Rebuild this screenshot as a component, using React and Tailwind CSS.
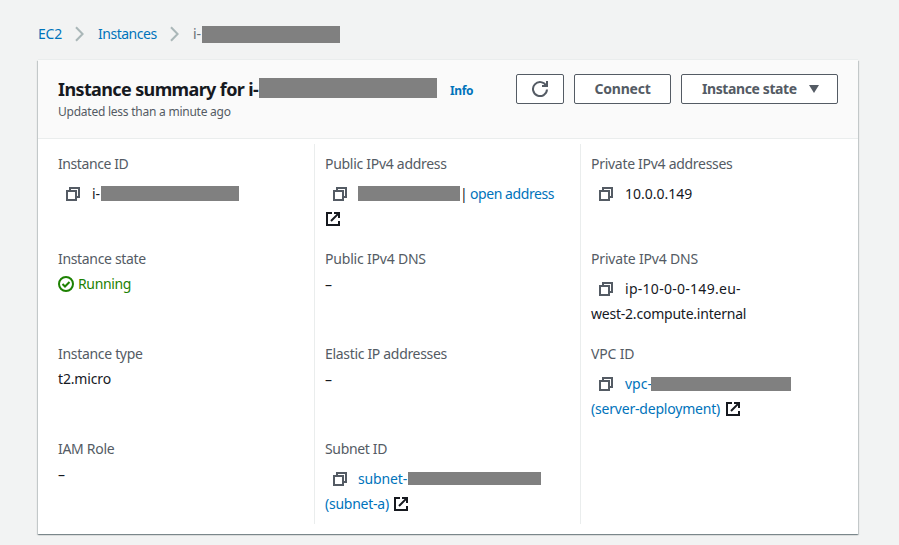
import React from "react";

function CopyIcon() {
  return (
    <svg width="14" height="14" viewBox="0 0 14 14" className="ml-2 shrink-0" fill="none" stroke="#545b64" strokeWidth="2">
      <path d="M1 4h9v9H1z" />
      <path d="M4 4V1h9v9h-3" />
    </svg>
  );
}

function ExternalIcon({ className = "" }) {
  return (
    <svg width="14" height="14" viewBox="0 0 14 14" className={"shrink-0 " + className} fill="none" stroke="#16191f" strokeWidth="2">
      <path d="M6 1H1v12h12V9" />
      <path d="M8 1h5v5M12.6 1.4 5 9" />
    </svg>
  );
}

function Chevron({ className = "" }) {
  return (
    <svg width="9" height="16" viewBox="0 0 9 16" className={"shrink-0 " + className} fill="none" stroke="#aab7b8" strokeWidth="2">
      <path d="M1 1.2 7.6 8 1 14.8" />
    </svg>
  );
}

function Mask({ className }) {
  return <span className={"block shrink-0 bg-[#808080] " + className} />;
}

function Field({ label, tracking = "tracking-[-0.29px]", children }) {
  return (
    <div className="h-[95px]">
      <div className={"flex h-6 items-center text-[#545b64] " + tracking}>{label}</div>
      {children}
    </div>
  );
}

function Line({ className = "", children }) {
  return <div className={"flex h-[25px] items-center " + className}>{children}</div>;
}

export default function App() {
  return (
    <div className="h-[545px] w-[899px] overflow-hidden bg-[#f2f3f3] pl-[38px] font-['Noto_Sans','Open_Sans',sans-serif] text-[14px] leading-5 whitespace-nowrap text-[#16191f]">
      <nav className="flex h-[60px] items-center pt-2 text-[#0073bb]">
        <span className="w-[37px] tracking-[-0.2px]">EC2</span>
        <Chevron className="mr-[14px]" />
        <span className="w-[72px] tracking-[-0.48px]">Instances</span>
        <Chevron className="mr-[14px]" />
        <span className="w-[9px] text-[#687078]">i-</span>
        <Mask className="h-[17px] w-[138px]" />
      </nav>

      <main className="h-[474px] w-[820px] bg-white shadow-[0_-1px_0_0_#eaeded,0_1px_1px_0_rgba(0,28,36,0.3),1px_1px_1px_0_rgba(0,28,36,0.15),-1px_1px_1px_0_rgba(0,28,36,0.15)]">
        <header className="flex h-[79px] justify-between border-b border-[#eaeded] bg-[#fafafa] px-5">
          <div className="pt-4">
            <div className="flex h-6 items-center">
              <h1 className="w-[201px] pt-px text-[18px] font-bold tracking-[-0.62px]">Instance summary for i-</h1>
              <Mask className="h-5 w-[178px]" />
              <span className="ml-[13px] pt-[6px] text-[12px] font-bold tracking-[-0.4px] text-[#0073bb]">Info</span>
            </div>
            <p className="mt-[2px] text-[12px] leading-5 tracking-[-0.24px] text-[#545b64]">Updated less than a minute ago</p>
          </div>
          <div className="flex gap-[10px] pt-[14px] font-bold text-[#545b64]">
            <button className="flex h-[30px] w-12 items-center justify-center rounded-[2px] border border-[#545b64] bg-white">
              <svg width="16" height="16" viewBox="0 0 16 16" fill="none" stroke="#545b64" strokeWidth="2">
                <path d="M15 8.5A7 7 0 1 1 14.2 4.8" />
                <path d="M15 0v5H10" />
              </svg>
            </button>
            <button className="flex h-[30px] w-[97px] items-center justify-center rounded-[2px] border border-[#545b64] bg-white tracking-[-0.2px]">Connect</button>
            <button className="flex h-[30px] w-[157px] items-center rounded-[2px] border border-[#545b64] bg-white pl-5">
              <span className="w-[107px] text-left tracking-[-0.4px]">Instance state</span>
              <svg width="10" height="8" viewBox="0 0 10 8" fill="#545b64">
                <path d="M0 0h10L5 8z" />
              </svg>
            </button>
          </div>
        </header>

        <div className="mt-[5px] grid h-[380px] grid-cols-[276px_266px_278px] grid-rows-[380px]">
          <section className="pt-2 pl-5">
            <Field label="Instance ID" tracking="tracking-[-0.42px]">
              <Line className="mt-[5px]">
                <CopyIcon />
                <span className="ml-3 w-[9px]">i-</span>
                <Mask className="h-[15px] w-[138px]" />
              </Line>
            </Field>
            <Field label="Instance state" tracking="tracking-[-0.33px]">
              <Line className="tracking-[-0.35px] text-[#1d8102]">
                <svg width="16" height="16" viewBox="0 0 16 16" className="mr-1" fill="none" stroke="#1d8102" strokeWidth="2">
                  <circle cx="8" cy="8" r="7" />
                  <path d="M4.5 8 7 10.5 11.5 6" />
                </svg>
                Running
              </Line>
            </Field>
            <Field label="Instance type" tracking="tracking-[-0.31px]">
              <Line className="tracking-[-0.15px]">t2.micro</Line>
            </Field>
            <Field label="IAM Role">
              <Line className="pt-[2px]">–</Line>
            </Field>
          </section>

          <section className="border-l border-[#eaeded] pt-2 pl-[10px]">
            <Field label="Public IPv4 address">
              <Line className="mt-[5px]">
                <CopyIcon />
                <Mask className="ml-[11px] h-[15px] w-[102px]" />
                <span className="w-[10px]">|</span>
                <a className="tracking-[-0.43px] text-[#0073bb]">open address</a>
              </Line>
              <Line>
                <ExternalIcon className="ml-[1px]" />
              </Line>
            </Field>
            <Field label="Public IPv4 DNS" tracking="tracking-[-0.2px]">
              <Line className="pt-[2px]">–</Line>
            </Field>
            <Field label="Elastic IP addresses" tracking="tracking-[-0.32px]">
              <Line className="pt-[2px]">–</Line>
            </Field>
            <Field label="Subnet ID" tracking="tracking-[-0.35px]">
              <Line className="mt-[5px] text-[#0073bb]">
                <CopyIcon />
                <span className="ml-[11px] w-[50px] tracking-[-0.15px]">subnet-</span>
                <Mask className="h-[13px] w-[133px]" />
              </Line>
              <Line className="text-[#0073bb]">
                <span className="w-[69px] tracking-[-0.25px]">(subnet-a)</span>
                <ExternalIcon />
              </Line>
            </Field>
          </section>

          <section className="border-l border-[#eaeded] pt-2 pl-[10px]">
            <Field label="Private IPv4 addresses">
              <Line className="mt-[5px]">
                <CopyIcon />
                <span className="ml-3">10.0.0.149</span>
              </Line>
            </Field>
            <Field label="Private IPv4 DNS" tracking="tracking-[-0.18px]">
              <Line className="mt-[5px]">
                <CopyIcon />
                <span className="ml-3 tracking-[0.28px]">ip-10-0-0-149.eu-</span>
              </Line>
              <Line className="tracking-[-0.22px]">west-2.compute.internal</Line>
            </Field>
            <Field label="VPC ID" tracking="tracking-[-0.17px]">
              <Line className="mt-[5px] text-[#0073bb]">
                <CopyIcon />
                <span className="ml-3 w-[26px]">vpc-</span>
                <Mask className="h-[14px] w-[140px]" />
              </Line>
              <Line className="text-[#0073bb]">
                <span className="w-[135px] tracking-[-0.2px]">(server-deployment)</span>
                <ExternalIcon />
              </Line>
            </Field>
          </section>
        </div>
      </main>
    </div>
  );
}
